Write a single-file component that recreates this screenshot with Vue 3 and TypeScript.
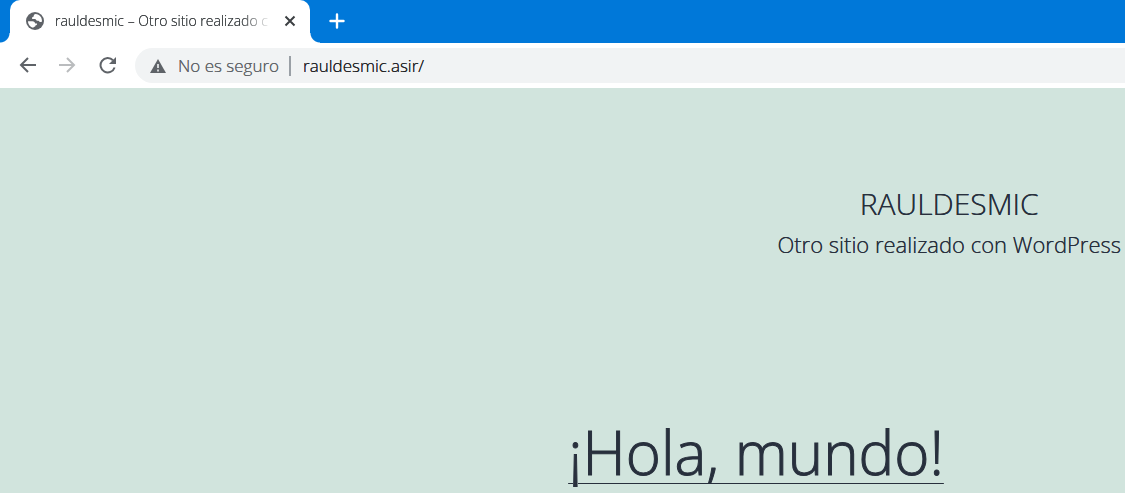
<script setup lang="ts">
import { ref } from 'vue'

const tabTitle = 'rauldesmic – Otro sitio realizado c'
const siteTitle = 'RAULDESMIC'
const tagline = 'Otro sitio realizado con WordPress'
const postTitle = '¡Hola, mundo!'
const host = ref('rauldesmic.asir/')
</script>

<template>
  <div class="browser">
    <header class="tabstrip">
      <div class="tab">
        <svg class="favicon" viewBox="0 0 18 18" aria-hidden="true">
          <circle cx="9" cy="9" r="9" fill="#5f6368" />
          <path
            fill="#fff"
            d="M9.6 2.1 C8.3 2.5 7.7 3.2 7.8 4 C7.9 4.9 6.7 4.7 6.2 5.4 C5.7 6.1 6 7 7 7.1 L9 7.1 C10.1 7.2 9.9 8.6 11 8.8 C12.3 9 12.9 8.7 13.3 9.5 C13.8 10.5 14.6 10 15.9 9.8 C16.5 6 13.6 2.2 9.6 2.1Z M2 9.2 L6.4 9.2 C8.1 9.2 9.1 10.2 9.2 11.5 L11 11.6 C11.4 12.7 10.6 13.4 9.4 13.4 L9.2 14.4 C8.2 14.5 7.5 15 7.3 15.8 C4.3 15 2 12.4 2 9.2Z"
          />
        </svg>
        <span class="tab-title">{{ tabTitle }}</span>
        <button class="icon-button close" type="button" aria-label="Cerrar pestaña">
          <svg viewBox="0 0 12 12"><path d="M1.5 1.5l9 9M10.5 1.5l-9 9" stroke="#3c4043" stroke-width="2" /></svg>
        </button>
      </div>
      <button class="icon-button new-tab" type="button" aria-label="Nueva pestaña">
        <svg viewBox="0 0 16 16"><path d="M8 1.500v13M1.500 8h13" stroke="#fff" stroke-width="2.400" stroke-linecap="round" /></svg>
      </button>
    </header>

    <nav class="toolbar">
      <button class="icon-button nav-button" type="button" aria-label="Atrás">
        <svg viewBox="0 0 18 18"><path d="M17 8H2M9 1L2 8L9 15" fill="none" stroke="#5f6368" stroke-width="2" /></svg>
      </button>
      <button class="icon-button nav-button" type="button" aria-label="Adelante" disabled>
        <svg viewBox="0 0 18 18"><path d="M0 8h15M8 1L15 8L8 15" fill="none" stroke="#babcbe" stroke-width="2" /></svg>
      </button>
      <button class="icon-button nav-button" type="button" aria-label="Recargar">
        <svg viewBox="0 0 18 18">
          <path d="M15.600 10.500A7.200 7.200 0 1 1 14 3.300" fill="none" stroke="#5f6368" stroke-width="2" />
          <path d="M17 0v7h-7z" fill="#5f6368" />
        </svg>
      </button>
      <div class="omnibox">
        <svg class="warning" viewBox="0 0 16 14" aria-hidden="true">
          <path d="M8 0l8 14H0z" fill="#5f6368" />
          <path d="M8 5v4M8 10.500v2" stroke="#f1f3f4" stroke-width="1.600" />
        </svg>
        <label class="security" for="address">No es seguro</label>
        <span class="divider"></span>
        <div class="address">
          <input id="address" v-model="host" type="text" spellcheck="false" />
        </div>
      </div>
    </nav>

    <main class="site">
      <div class="branding">
        <p class="site-title">{{ siteTitle }}</p>
        <p class="tagline">{{ tagline }}</p>
      </div>
      <article class="post">
        <h2><a href="#hola-mundo">{{ postTitle }}</a></h2>
      </article>
    </main>
  </div>
</template>

<style>
body {
  margin: 0;
  background: #d1e4dd;
  overflow: hidden;
}
</style>

<style scoped>
.browser {
  font-family: 'Open Sans', 'Noto Sans', sans-serif;
  font-weight: 300;
  color: #28303d;
  text-shadow: 0 0 currentColor;
}
.icon-button {
  display: flex;
  align-items: center;
  justify-content: center;
  flex: none;
  padding: 0;
  border: 0;
  background: none;
}
.tabstrip {
  display: flex;
  height: 43px;
  padding-left: 10px;
  background: #0078d9;
}
.tab {
  position: relative;
  display: flex;
  align-items: center;
  box-sizing: border-box;
  width: 300px;
  padding: 0 14px 2px 16px;
  border-radius: 10px 10px 0 0;
  background: #fff;
}
.tab::before,
.tab::after {
  content: '';
  position: absolute;
  bottom: 0;
  width: 10px;
  height: 10px;
}
.tab::before {
  right: 100%;
  background: radial-gradient(circle at 0 0, #0078d9 9px, #fff 10px);
}
.tab::after {
  left: 100%;
  background: radial-gradient(circle at 100% 0, #0078d9 9px, #fff 10px);
}
.favicon {
  flex: none;
  width: 18px;
  height: 18px;
  margin-right: 11px;
}
.tab-title {
  flex: 1;
  margin-right: 8px;
  color: #3c4043;
  font-size: 14px;
  line-height: 20px;
  white-space: nowrap;
  mask-image: linear-gradient(to right, #000 84%, transparent 98%);
}
.close svg {
  width: 12px;
  height: 12px;
}
.new-tab {
  width: 16px;
  margin-left: 19px;
  padding-bottom: 1px;
}
.new-tab svg {
  width: 16px;
  height: 16px;
}
.toolbar {
  display: flex;
  align-items: center;
  box-sizing: border-box;
  height: 45px;
  padding-left: 19px;
  background: #fff;
}
.nav-button {
  width: 18px;
  height: 18px;
  margin-right: 22px;
}
.nav-button svg {
  width: 18px;
  height: 18px;
}
.nav-button + .omnibox {
  margin-left: -4px;
}
.omnibox {
  display: flex;
  flex: 1;
  align-items: center;
  height: 35px;
  padding-left: 15px;
  border-radius: 18px 0 0 18px;
  background: #f1f3f4;
  font-size: 17px;
}
.warning {
  flex: none;
  width: 16px;
  height: 14px;
  margin-right: 12px;
}
.security {
  color: #5f6368;
  white-space: nowrap;
}
.divider {
  width: 2px;
  height: 20px;
  margin: 0 12px 0 10px;
  background: #9aa0a6;
}
.address {
  flex: 1;
}
.address input {
  width: 100%;
  padding: 0;
  border: 0;
  outline: 0;
  background: none;
  color: #202124;
  font: inherit;
  text-shadow: inherit;
}
.site {
  padding-top: 95px;
  background: #d1e4dd;
}
.branding {
  width: fit-content;
  margin-left: auto;
  padding-right: 4px;
  text-align: center;
}
.site-title,
.tagline {
  margin: 0;
}
.site-title {
  font-size: 30px;
  line-height: 42px;
}
.tagline {
  font-size: 22px;
  line-height: 38px;
}
.post {
  margin: 149px 0 0 50.5%;
}
.post h2 {
  margin: 0;
  font-size: 60px;
  font-weight: 300;
  line-height: 80px;
  white-space: nowrap;
  text-shadow: none;
}
.post a {
  color: inherit;
  text-decoration-thickness: 1px;
  text-underline-offset: 8px;
  -webkit-text-stroke: 1px currentColor;
}
</style>
